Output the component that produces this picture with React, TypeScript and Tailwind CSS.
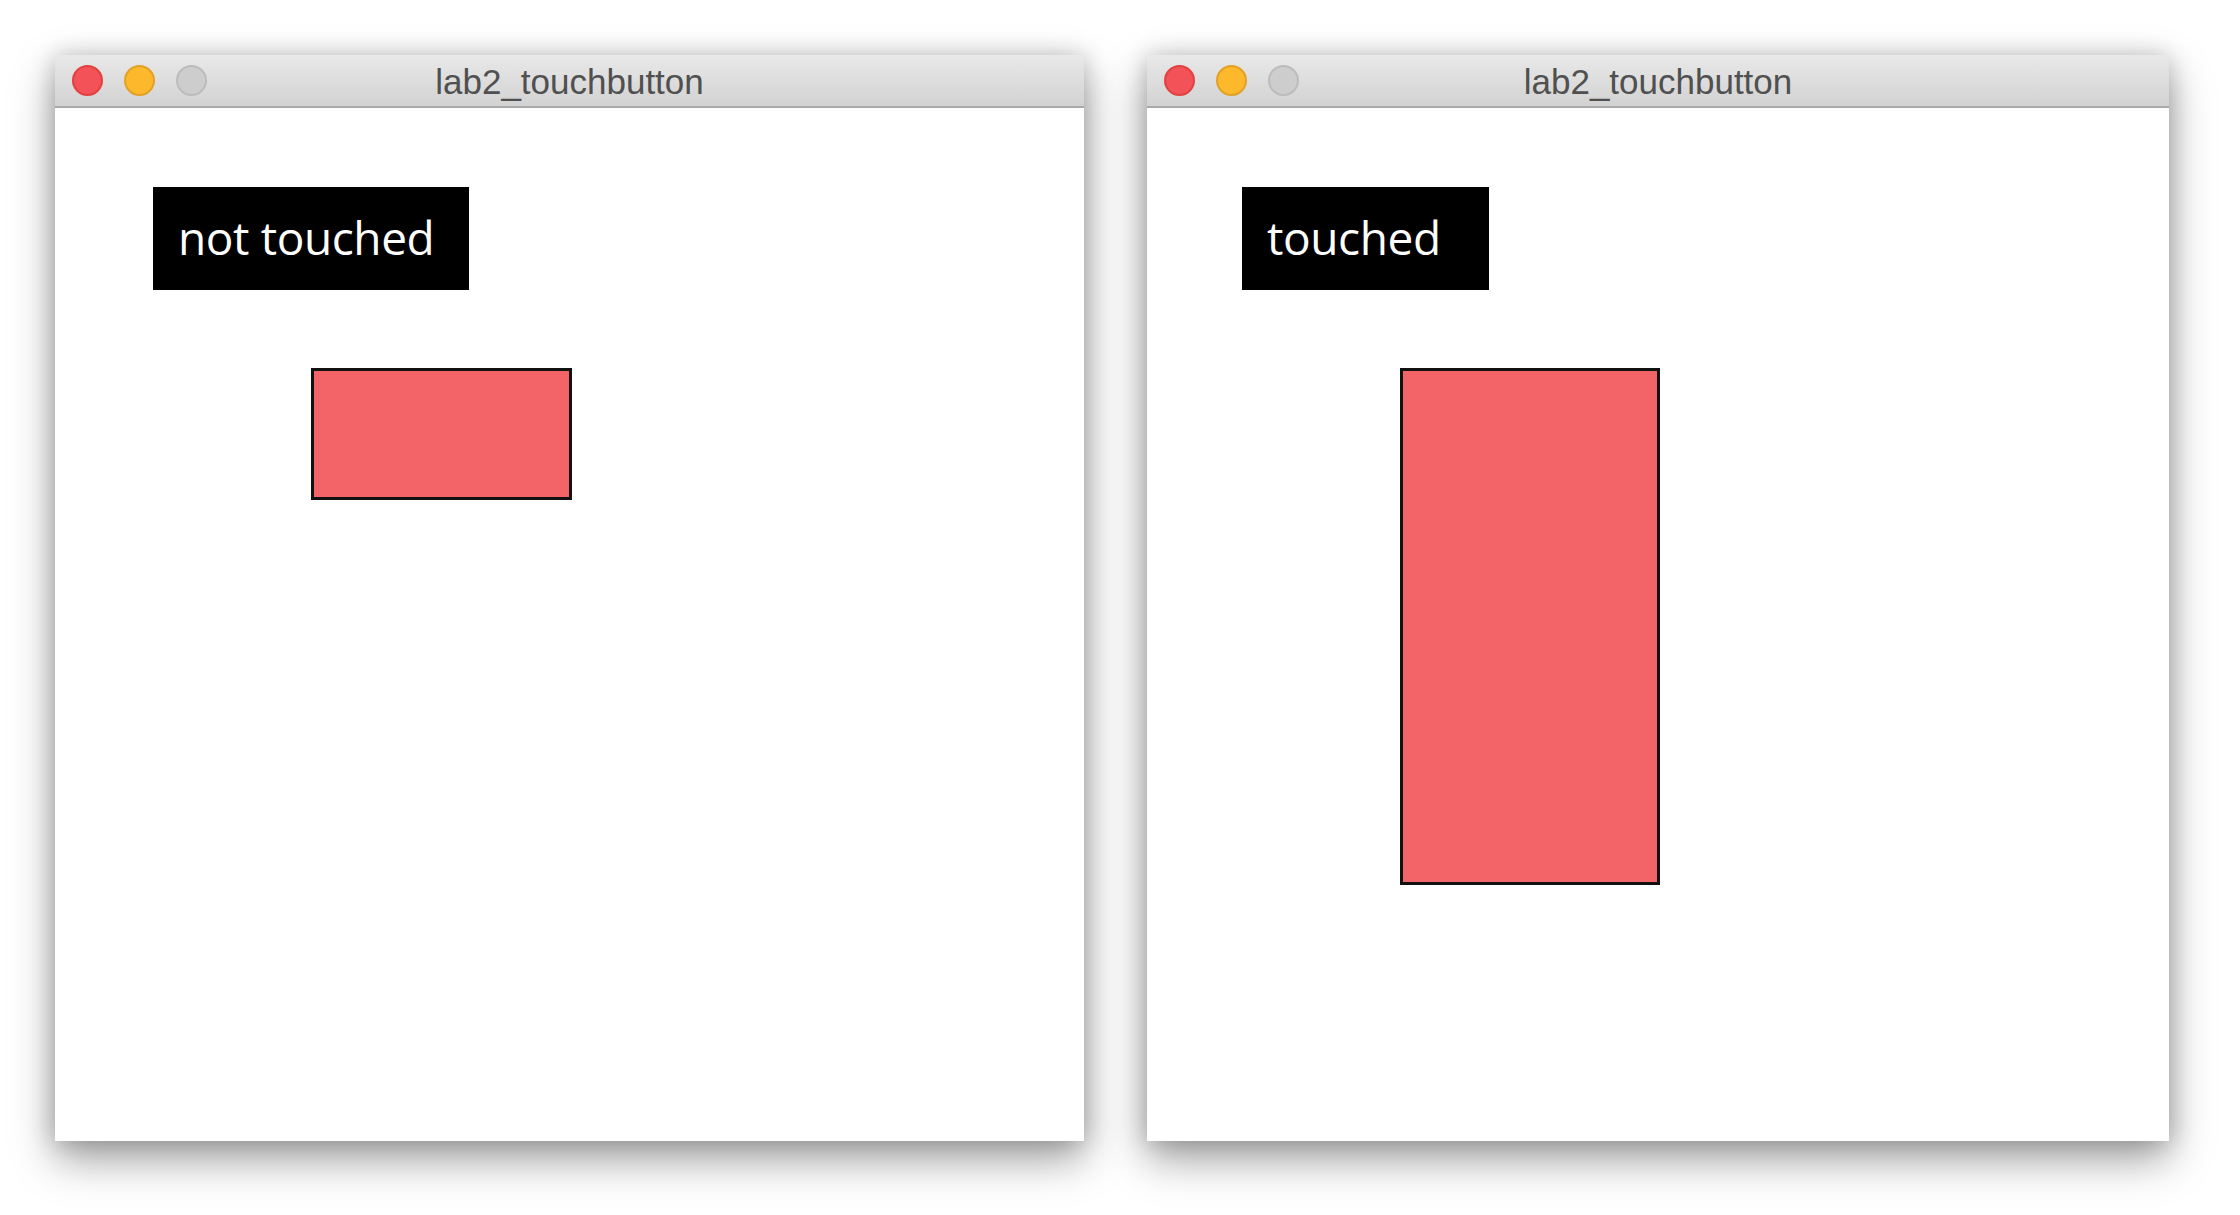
import React from 'react';

type WinProps = {
  width: string;
  label: string;
  labelWidth: string;
  rect: string;
};

const TrafficLights: React.FC = () => (
  <div className="flex items-center gap-[21px]">
    <span className="block w-[31px] h-[31px] rounded-full bg-[#f25258] border-2 border-[#e2413f]" />
    <span className="block w-[31px] h-[31px] rounded-full bg-[#fdb82b] border-2 border-[#e1a125]" />
    <span className="block w-[31px] h-[31px] rounded-full bg-[#cdcdcd] border-2 border-[#bcbcbc]" />
  </div>
);

const Window: React.FC<WinProps> = ({ width, label, labelWidth, rect }) => (
  <div className={`${width} h-[1086px] flex flex-col bg-white shadow-[0_18px_40px_rgba(0,0,0,0.38),0_0_22px_rgba(0,0,0,0.18)]`}>
    <div className="relative h-[53px] flex items-center px-[17px] bg-gradient-to-b from-[#e9e9e9] to-[#d2d2d2] border-b-2 border-[#a9a9a9]">
      <TrafficLights />
      <div className="absolute inset-0 flex items-center justify-center text-[35px] text-[#505050] font-['Liberation_Sans',Arial,sans-serif] leading-none pt-[2px]">
        lab2_touchbutton
      </div>
    </div>
    <div className="flex-1 flex flex-col items-start">
      <div
        className={`mt-[79px] ${labelWidth} h-[103px] bg-black text-white flex items-center pl-[25px] text-[46px] tracking-[-0.4px] font-['Open_Sans',Lato,sans-serif] leading-none pb-[4px]`}
      >
        {label}
      </div>
      <div className={`${rect} mt-[78px] bg-[#f26468] border-[3px] border-[#111]`} />
    </div>
  </div>
);

const App: React.FC = () => {
  return (
    <div className="w-[2240px] h-[1215px] bg-white flex items-start gap-[63px] pl-[55px] pt-[55px]">
      <Window
        width="w-[1029px]"
        label="not touched"
        labelWidth="ml-[98px] w-[316px]"
        rect="ml-[256px] w-[261px] h-[132px]"
      />
      <Window
        width="w-[1022px]"
        label="touched"
        labelWidth="ml-[95px] w-[247px]"
        rect="ml-[253px] w-[260px] h-[517px]"
      />
    </div>
  );
};

export default App;
